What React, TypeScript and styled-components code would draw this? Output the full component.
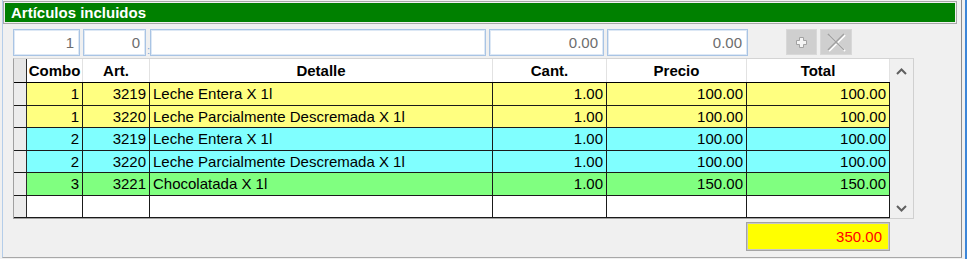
import React from 'react';
import styled, { createGlobalStyle } from 'styled-components';

type Row = {
    combo: string,
    art: string,
    detalle: string,
    cant: string,
    precio: string,
    total: string,
    color: string,
}

const rows: Row[] = [
    { combo: '1', art: '3219', detalle: 'Leche Entera X 1l', cant: '1.00', precio: '100.00', total: '100.00', color: '#ffff80' },
    { combo: '1', art: '3220', detalle: 'Leche Parcialmente Descremada X 1l', cant: '1.00', precio: '100.00', total: '100.00', color: '#ffff80' },
    { combo: '2', art: '3219', detalle: 'Leche Entera X 1l', cant: '1.00', precio: '100.00', total: '100.00', color: '#80ffff' },
    { combo: '2', art: '3220', detalle: 'Leche Parcialmente Descremada X 1l', cant: '1.00', precio: '100.00', total: '100.00', color: '#80ffff' },
    { combo: '3', art: '3221', detalle: 'Chocolatada X 1l', cant: '1.00', precio: '150.00', total: '150.00', color: '#80ff80' },
];

const cols = [
    { key: 'combo', label: 'Combo', w: 56, align: 'right' },
    { key: 'art', label: 'Art.', w: 67, align: 'right' },
    { key: 'detalle', label: 'Detalle', w: 343, align: 'left' },
    { key: 'cant', label: 'Cant.', w: 114, align: 'right' },
    { key: 'precio', label: 'Precio', w: 140, align: 'right' },
    { key: 'total', label: 'Total', w: 143, align: 'right' },
] as const;

const App: React.FC = () => {
    return (
        <Window>
            <GlobalStyle />
            <Panel>
                <TitleBar>Artículos incluidos</TitleBar>
                <Content>
                    <InputRow>
                        <Field $w={67}>1</Field>
                        <Field $w={63}>0</Field>
                        <Colon>:</Colon>
                        <Field $w={336}></Field>
                        <Field $w={115}>0.00</Field>
                        <Field $w={141}>0.00</Field>
                        <ToolButton $w={31} style={{ marginLeft: 35 }}>
                            <svg width="11" height="11" viewBox="0 0 11 11">
                                <path d="M3.5 0.5h4v3h3v4h-3v3h-4v-3h-3v-4h3z" fill="#f4f4f4" stroke="#a2a2a2" />
                            </svg>
                        </ToolButton>
                        <ToolButton $w={32}>
                            <svg width="20" height="20" viewBox="0 0 20 20">
                                <path d="M2 2L18 18M18 2L2 18" stroke="#ffffff" strokeWidth="2" transform="translate(1 1)" />
                                <path d="M2 2L18 18M18 2L2 18" stroke="#a0a0a0" strokeWidth="1.6" />
                            </svg>
                        </ToolButton>
                    </InputRow>
                    <Grid>
                        <Table>
                            <HeaderRow>
                                <RowHead $header />
                                {cols.map(c => (
                                    <HeadCell key={c.key} $w={c.w}>{c.label}</HeadCell>
                                ))}
                            </HeaderRow>
                            {rows.map((r, i) => (
                                <DataRow key={i} $bg={r.color}>
                                    <RowHead />
                                    {cols.map(c => (
                                        <Cell key={c.key} $w={c.w} $align={c.align}>{r[c.key]}</Cell>
                                    ))}
                                </DataRow>
                            ))}
                            <DataRow $bg="#ffffff">
                                <RowHead />
                                {cols.map(c => (
                                    <Cell key={c.key} $w={c.w} $align={c.align}></Cell>
                                ))}
                            </DataRow>
                        </Table>
                        <ScrollBar>
                            <svg width="11" height="7" viewBox="0 0 11 7">
                                <polyline points="1,6 5.5,1.5 10,6" fill="none" stroke="#606060" strokeWidth="2" />
                            </svg>
                            <svg width="11" height="7" viewBox="0 0 11 7">
                                <polyline points="1,1 5.5,5.5 10,1" fill="none" stroke="#606060" strokeWidth="2" />
                            </svg>
                        </ScrollBar>
                    </Grid>
                    <TotalRow>
                        <TotalBox>350.00</TotalBox>
                    </TotalRow>
                </Content>
            </Panel>
            <RightEdge />
        </Window>
    )
}

export default App;

const GlobalStyle = createGlobalStyle`
    html, body {
        margin: 0;
        padding: 0;
        background: #f0f0f0;
    }
    body {
        font-family: "Liberation Sans", Arial, sans-serif;
        font-size: 15px;
    }
`

const Window = styled.div`
    width: 967px;
    height: 259px;
    box-sizing: border-box;
    padding-left: 2px;
    display: flex;
    background: #f0f0f0;
    overflow: hidden;
`

const Panel = styled.div`
    width: 960px;
    height: 258px;
    box-sizing: border-box;
    border-left: 1px solid #b4cde9;
    border-right: 1px solid #8c8c8c;
    border-bottom: 1px solid #a8a8a8;
    padding: 3px 0 0 2px;
`

const RightEdge = styled.div`
    width: 2px;
    margin-left: 3px;
    background: #3d86d8;
`

const TitleBar = styled.div`
    width: 950px;
    height: 19px;
    box-sizing: border-box;
    background: #008000;
    color: #ffffff;
    font-weight: bold;
    font-size: 15px;
    line-height: 19px;
    padding-left: 6px;
    box-shadow: 0 0 0 1px #f0f0f0, 0 0 0 2px #a8a8a8;
`

const Content = styled.div`
    padding-left: 8px;
`

const InputRow = styled.div`
    display: flex;
    gap: 3px;
    margin-top: 7px;
    height: 27px;
`

const Field = styled.div<{ $w: number }>`
    width: ${p => p.$w}px;
    height: 27px;
    box-sizing: border-box;
    border: 1px solid #a9c4e4;
    box-shadow: inset 0 0 0 1px #dde8f5;
    background: #ffffff;
    color: #6d6d6d;
    text-align: right;
    padding-right: 5px;
    line-height: 25px;
`

const Colon = styled.div`
    width: 1px;
    margin: 0 -1px 0 -2px;
    color: #7ea3d3;
    font-size: 11px;
    line-height: 42px;
`

const ToolButton = styled.div<{ $w: number }>`
    width: ${p => p.$w}px;
    height: 26px;
    box-sizing: border-box;
    background: #cfcfcf;
    border: 1px solid #d8d8d8;
    display: flex;
    align-items: center;
    justify-content: center;
`

const Grid = styled.div`
    display: flex;
    margin-top: 2px;
`

const Table = styled.div`
    border-left: 1px solid #a0a0a0;
    border-top: 1px solid #d4d4d4;
    border-bottom: 1px solid #a0a0a0;
    background: #ffffff;
`

const HeaderRow = styled.div`
    display: flex;
    height: 24px;
    box-sizing: border-box;
    border-bottom: 1px solid #000000;
    background: #ffffff;
`

const DataRow = styled.div<{ $bg: string }>`
    display: flex;
    height: 22.5px;
    box-sizing: border-box;
    border-bottom: 1px solid #1a1a1a;
    background: ${p => p.$bg};
`

const RowHead = styled.div<{ $header?: boolean }>`
    width: 13px;
    box-sizing: border-box;
    background: ${p => p.$header ? '#e6e6e6' : '#ececec'};
    border-right: 1px solid #2a2a2a;
`

const HeadCell = styled.div<{ $w: number }>`
    width: ${p => p.$w}px;
    box-sizing: border-box;
    border-right: 1px solid #e2e2e2;
    font-weight: bold;
    text-align: center;
    line-height: 23px;
    color: #000000;
`

const Cell = styled.div<{ $w: number, $align: string }>`
    width: ${p => p.$w}px;
    box-sizing: border-box;
    border-right: 1px solid #1a1a1a;
    text-align: ${p => p.$align};
    padding: 0 3px;
    line-height: 21px;
    color: #000000;
    white-space: nowrap;
    overflow: hidden;
`

const ScrollBar = styled.div`
    width: 24px;
    box-sizing: border-box;
    border-top: 1px solid #d4d4d4;
    border-right: 1px solid #d0d0d0;
    border-bottom: 1px solid #d0d0d0;
    background: #f0f0f0;
    display: flex;
    flex-direction: column;
    justify-content: space-between;
    align-items: center;
    padding: 9px 0 6px 0;
`

const TotalRow = styled.div`
    width: 877px;
    display: flex;
    justify-content: flex-end;
    margin-top: 3px;
`

const TotalBox = styled.div`
    width: 144px;
    height: 29px;
    box-sizing: border-box;
    background: #ffff00;
    border: 1px solid #a4a4a4;
    box-shadow: inset 0 0 0 1px #c8c8c8;
    color: #ff0000;
    text-align: right;
    padding-right: 7px;
    line-height: 27px;
`
